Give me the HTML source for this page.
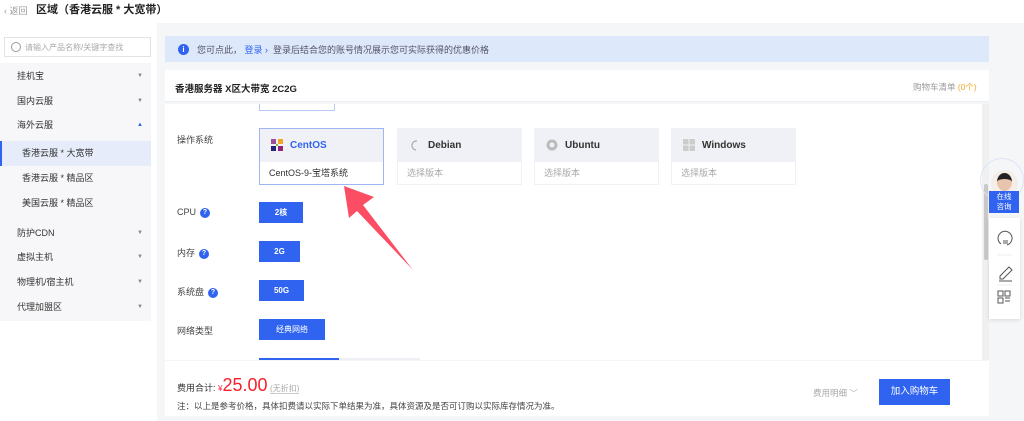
<!DOCTYPE html>
<html><head><meta charset="utf-8"><style>
*{margin:0;padding:0;box-sizing:border-box}
body{width:1024px;height:421px;overflow:hidden;background:#f5f6f8;font-family:"Liberation Sans","Noto Sans CJK SC",sans-serif;font-size:9px;color:#333;position:relative}
.a{position:absolute}
.side{left:0;top:0;width:157px;height:421px;background:#fff}
.mi{position:absolute;left:0;width:151px;height:25px;line-height:25px;padding-left:17px;font-size:9px;color:#333;background:#f7f7f9}
.mi .c{position:absolute;right:8px;top:0;font-size:6px;color:#888}
.sub{padding-left:22px}
.btn{position:absolute;left:259px;height:21px;line-height:21px;background:#2f63f0;color:#fff;font-size:8px;font-weight:bold;text-align:center}
.lbl{position:absolute;left:177px;font-size:9px;color:#444}
.q{display:inline-block;width:10px;height:10px;border-radius:50%;background:#2f63f0;color:#fff;font-size:7px;line-height:10px;text-align:center;font-weight:bold;margin-left:4px;vertical-align:middle}
.os{position:absolute;top:128px;width:125px;height:57px;background:#fff;border:1px solid #f0f1f4}
.os .h{height:33px;background:#eff1f6;line-height:33px;padding-left:30px;font-size:10px;font-weight:bold;color:#333;position:relative}
.os .b{height:23px;line-height:23px;padding-left:9px;color:#aaa;font-size:9px}
.os .ic{position:absolute;left:11px;top:10px;width:12px;height:12px}
</style></head><body>
<div class="a side"></div>
<div class="a" style="left:0;top:0;width:1024px;height:23px;background:#fff"></div>
<div class="a" style="left:4px;top:4px;font-size:9px;color:#999;white-space:nowrap">‹ 返回</div>
<div class="a" style="left:36px;top:1px;font-size:11px;font-weight:bold;color:#222;white-space:nowrap">区域（香港云服 * 大宽带）</div>
<div class="a" style="left:4px;top:37px;width:147px;height:20px;border:1px solid #e3e3e3;background:#fff"><span class="a" style="left:6px;top:4px;width:10px;height:10px;border:1px solid #999;border-radius:50%"></span><span class="a" style="left:20px;top:4px;font-size:8px;color:#aaa">请输入产品名称/关键字查找</span></div>
<div class="a" style="left:0;top:63px;width:151px;height:258px;background:#f7f7f9"></div>
<div class="mi" style="top:64px">挂机宝<span class="c">▼</span></div>
<div class="mi" style="top:89px">国内云服<span class="c">▼</span></div>
<div class="mi" style="top:113px">海外云服<span class="c" style="color:#2f63f0">▲</span></div>
<div class="mi sub" style="top:141px;background:#e6ecfa;border-left:2px solid #2f63f0;padding-left:20px">香港云服 * 大宽带</div>
<div class="mi sub" style="top:166px">香港云服 * 精品区</div>
<div class="mi sub" style="top:191px">美国云服 * 精品区</div>
<div class="mi" style="top:221px">防护CDN<span class="c">▼</span></div>
<div class="mi" style="top:245px">虚拟主机<span class="c">▼</span></div>
<div class="mi" style="top:270px">物理机/宿主机<span class="c">▼</span></div>
<div class="mi" style="top:295px">代理加盟区<span class="c">▼</span></div>

<div class="a" style="left:165px;top:36px;width:824px;height:26px;background:#dde8fb"></div>
<div class="a" style="left:178px;top:44px;width:11px;height:11px;border-radius:50%;background:#2f63f0;color:#fff;font-size:8px;line-height:11px;text-align:center;font-weight:bold">i</div>
<div class="a" style="left:197px;top:43px;font-size:9px;color:#556">您可点此， <span style="color:#2f63f0">登录 ›</span>&nbsp; 登录后结合您的账号情况展示您可实际获得的优惠价格</div>

<div class="a" style="left:165px;top:70px;width:824px;height:32px;background:#fff;border-bottom:1px solid #eceef2"></div>
<div class="a" style="left:175px;top:81px;font-size:9.5px;font-weight:bold;color:#222">香港服务器 X区大带宽 2C2G</div>
<div class="a" style="left:913px;top:81px;font-size:8.5px;color:#999">购物车清单 <span style="color:#f5a623">(0个)</span></div>
<div class="a" style="left:165px;top:104px;width:817px;height:256px;background:#fff"></div>
<div class="a" style="left:982px;top:104px;width:7px;height:256px;background:#f0f0f0"></div>
<div class="a" style="left:984px;top:184px;width:4px;height:76px;background:#c8c8c8;border-radius:2px"></div>
<div class="a" style="left:259px;top:104px;width:76px;height:7px;border:1px solid #b8c8f5;border-top:none"></div>

<div class="lbl" style="top:133px">操作系统</div>
<div class="os" style="left:259px;border-color:#9fb6f5"><div class="h" style="color:#2f63f0;background:#eff1f6"><svg class="ic" viewBox="0 0 12 12"><rect x="0" y="0" width="5" height="5" fill="#9b4f96"/><rect x="7" y="0" width="5" height="5" fill="#efa724"/><rect x="0" y="7" width="5" height="5" fill="#262577"/><rect x="7" y="7" width="5" height="5" fill="#932279"/><rect x="5" y="5" width="2" height="2" fill="#8fb23f"/></svg>CentOS</div><div class="b" style="color:#333">CentOS-9-宝塔系统</div></div>
<div class="os" style="left:397px"><div class="h"><svg class="ic" viewBox="0 0 12 12"><path d="M8 2 A4.5 4.5 0 1 0 7 11" fill="none" stroke="#aaa" stroke-width="1.2"/></svg>Debian</div><div class="b">选择版本</div></div>
<div class="os" style="left:534px"><div class="h"><svg class="ic" viewBox="0 0 12 12"><circle cx="6" cy="6" r="5.5" fill="#bbb"/><circle cx="6" cy="6" r="2.5" fill="#eff1f6"/></svg>Ubuntu</div><div class="b">选择版本</div></div>
<div class="os" style="left:671px"><div class="h"><svg class="ic" viewBox="0 0 12 12"><rect x="0" y="0" width="5.5" height="5.5" fill="#ccc"/><rect x="6.5" y="0" width="5.5" height="5.5" fill="#ccc"/><rect x="0" y="6.5" width="5.5" height="5.5" fill="#ccc"/><rect x="6.5" y="6.5" width="5.5" height="5.5" fill="#ccc"/></svg>Windows</div><div class="b">选择版本</div></div>

<div class="lbl" style="top:207px">CPU<span class="q">?</span></div>
<div class="btn" style="top:202px;width:44px">2核</div>
<div class="lbl" style="top:246px">内存<span class="q">?</span></div>
<div class="btn" style="top:241px;width:41px">2G</div>
<div class="lbl" style="top:285px">系统盘<span class="q">?</span></div>
<div class="btn" style="top:280px;width:45px">50G</div>
<div class="lbl" style="top:324px">网络类型</div>
<div class="btn" style="top:319px;width:66px;font-weight:normal">经典网络</div>
<div class="a" style="left:259px;top:358px;width:80px;height:2px;background:#2f63f0"></div>
<div class="a" style="left:339px;top:358px;width:81px;height:2px;background:#eef0f5"></div>

<svg class="a" style="left:0;top:0" width="1024" height="421"><polygon points="344,186 374,197 363,205 413,270 357,211 349,218" fill="#fb4d63"/></svg>

<div class="a" style="left:165px;top:361px;width:824px;height:55px;background:#fff"></div>
<div class="a" style="left:177px;top:375px;font-size:9px;color:#333;white-space:nowrap">费用合计: <span style="color:#f5222d;font-size:8px">¥</span><span style="color:#f5222d;font-size:18px">25.00</span> <span style="color:#aaa;font-size:8px;border-bottom:1px solid #ccc">(无折扣)</span></div>
<div class="a" style="left:177px;top:400px;font-size:8.5px;color:#444;white-space:nowrap">注：以上是参考价格，具体扣费请以实际下单结果为准，具体资源及是否可订购以实际库存情况为准。</div>
<div class="a" style="left:813px;top:387px;font-size:8.5px;color:#aaa">费用明细 ﹀</div>
<div class="a" style="left:879px;top:379px;width:71px;height:26px;background:#2f63f0;color:#fff;font-size:9.5px;line-height:26px;text-align:center">加入购物车</div>

<div class="a" style="left:980px;top:158px;width:44px;height:44px;border-radius:50%;border:1px solid #dde4fb"></div>
<div class="a" style="left:991px;top:170px;width:27px;height:27px;border-radius:50%;background:#f3eee8;overflow:hidden"><div class="a" style="left:6px;top:3px;width:15px;height:18px;border-radius:50%;background:#e8c4ad;border-top:6px solid #222"></div></div>
<div class="a" style="left:989px;top:191px;width:30px;height:22px;background:#2f63f0;color:#fff;font-size:7.5px;line-height:10px;text-align:center;padding-top:1px">在线<br>咨询</div>
<div class="a" style="left:989px;top:218px;width:31px;height:101px;background:#fff;box-shadow:0 1px 4px rgba(0,0,0,.12)"></div>
<svg class="a" style="left:989px;top:218px" width="31" height="101" viewBox="0 0 31 101"><g fill="none" stroke="#555" stroke-width="1"><path d="M12 26 A7 7 0 1 1 18 27"/><path d="M14 23 h5 M14 25 h5"/><path d="M11 58 l9 -9 l3 3 l-9 9 h-3z M10 63 h13"/><rect x="9" y="73" width="5" height="5"/><rect x="16" y="73" width="5" height="5"/><rect x="9" y="80" width="5" height="5"/><path d="M16 80 h5 M16 83 h5"/></g><path d="M8 37 h15 M8 67 h15" stroke="#eee"/></svg>
</body></html>
